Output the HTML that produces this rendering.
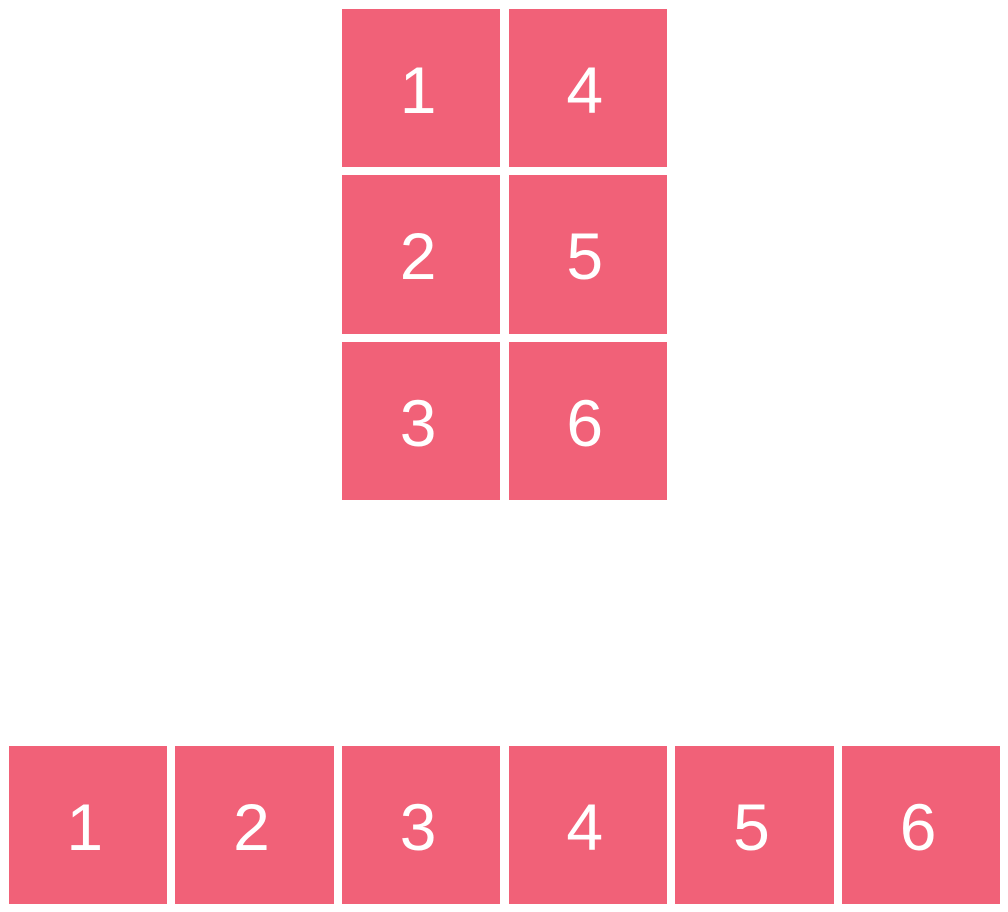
<!DOCTYPE html>
<html><head><style>
html,body{margin:0;padding:0;background:#fff;width:1008px;height:912px;overflow:hidden;position:relative}
.b{position:absolute;width:158.5px;height:158.5px;background:#f16178;color:#fff;font-family:"Liberation Sans",Arial,sans-serif;font-size:66px;display:flex;align-items:center;justify-content:center;line-height:1}
.b span{position:relative;left:-3px;top:2px}
</style></head><body>
<div class="b" style="left:341.8px;top:8.5px"><span>1</span></div>
<div class="b" style="left:508.5px;top:8.5px"><span>4</span></div>
<div class="b" style="left:341.8px;top:175.2px"><span>2</span></div>
<div class="b" style="left:508.5px;top:175.2px"><span>5</span></div>
<div class="b" style="left:341.8px;top:341.8px"><span>3</span></div>
<div class="b" style="left:508.5px;top:341.8px"><span>6</span></div>
<div class="b" style="left:8.5px;top:745.8px"><span>1</span></div>
<div class="b" style="left:175.2px;top:745.8px"><span>2</span></div>
<div class="b" style="left:341.8px;top:745.8px"><span>3</span></div>
<div class="b" style="left:508.5px;top:745.8px"><span>4</span></div>
<div class="b" style="left:675.2px;top:745.8px"><span>5</span></div>
<div class="b" style="left:841.8px;top:745.8px"><span>6</span></div>
</body></html>
